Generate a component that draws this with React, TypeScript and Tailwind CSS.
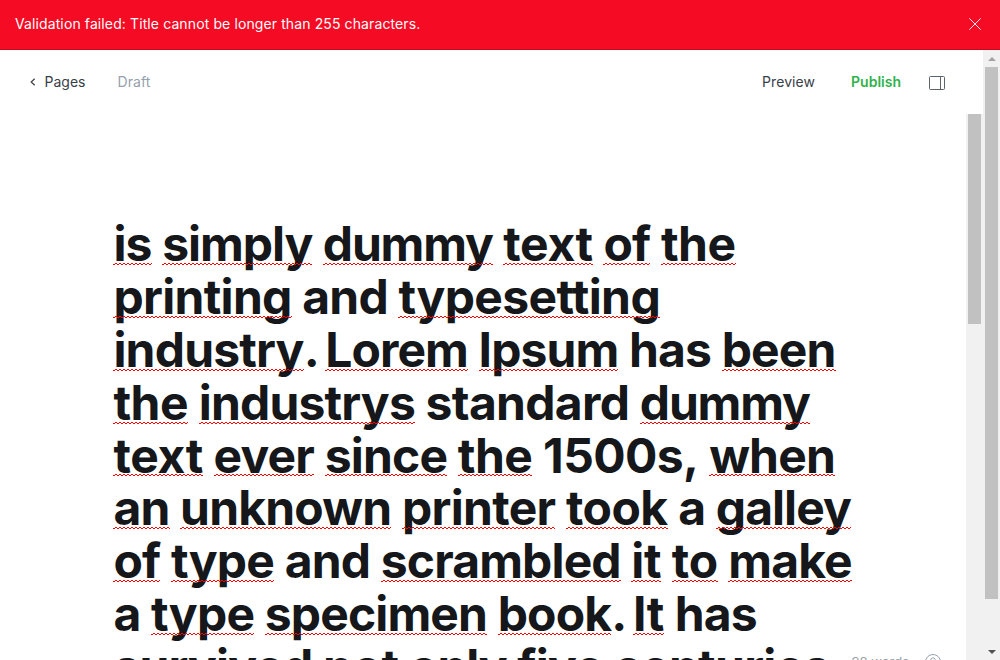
import React from "react";

const lines: string[] = [
  "_is _simply _dummy _text _of _the",
  "_printing and _typesetting",
  "_industry. _Lorem _Ipsum has _been",
  "_the _industrys standard _dummy",
  "_text _ever _since _the 1500s, _when",
  "_an _unknown _printer _took a _galley",
  "_of _type and _scrambled _it _to _make",
  "a _type _specimen _book. _It has",
  "_survived not _only _five _centuries,",
];

// Optical width adjustments, in pixels, spread over the letters of a word.
const adjustments: Record<string, number> = { t: 1, m: -0.5, y: -0.9, "0": 0.7, ".": -4.2 };

function tracking(text: string) {
  const extra = [...text].reduce((sum, c) => sum + (adjustments[c] ?? 0), 0);
  return { letterSpacing: `${(-0.816 + extra / text.length).toFixed(3)}px` };
}

function Squiggle() {
  return (
    <span
      aria-hidden="true"
      className="absolute bottom-[5px] left-0 h-[3px] w-full bg-[conic-gradient(from_0deg_at_50%_50%,#f00_0_25%,transparent_0_50%,#f00_0_75%,transparent_0)] bg-[length:4px_2px] bg-repeat-x"
    />
  );
}

function Word({ value }: { value: string }) {
  if (!value.startsWith("_")) return <span style={tracking(value)}>{value}</span>;
  const match = value.slice(1).match(/^([A-Za-z]+)(.*)$/);
  if (!match) return null;
  return (
    <>
      <span className="relative inline-block" style={tracking(match[1])}>
        {match[1]}
        <Squiggle />
      </span>
      {match[2] && <span style={tracking(match[2])}>{match[2]}</span>}
    </>
  );
}

export default function App() {
  return (
    <div className="flex h-[660px] w-[1000px] flex-col overflow-hidden bg-white font-['Inter',sans-serif] text-sm text-[#394047]">
      <div className="flex h-[50px] shrink-0 items-center justify-between border-b border-[#c9081e] bg-[#f50b23] pr-[19px] pb-px pl-[15px] text-white">
        <span className="tracking-[0.11px]">Validation failed: Title cannot be longer than 255 characters.</span>
        <svg width="12" height="12" viewBox="0 0 12 12" fill="none" stroke="#fff" strokeOpacity=".9">
          <path d="M.3.3l11.4 11.4M11.7.3L.3 11.7" />
        </svg>
      </div>
      <div className="flex min-h-0 flex-1">
        <div className="flex min-w-0 flex-1 flex-col">
          <header className="flex h-16 shrink-0 items-center justify-between pr-[38px] pl-[30px]">
            <div className="flex items-center">
              <svg width="6" height="8" viewBox="0 0 6 8" fill="none" stroke="#394047" strokeWidth="1.2">
                <path d="M4.7.8L1.2 4l3.5 3.2" />
              </svg>
              <span className="ml-[8.5px]">Pages</span>
              <span className="ml-8 tracking-[0.1px] text-[#95a1ad]">Draft</span>
            </div>
            <div className="flex items-center">
              <span className="tracking-[0.07px]">Preview</span>
              <span className="ml-9 font-semibold text-[#30b24a]">Publish</span>
              <svg className="mt-px ml-7" width="16" height="14" viewBox="0 0 16 14" fill="none" stroke="#5b636b">
                <rect x=".5" y=".5" width="15" height="13" rx="1" />
                <path d="M11.5.5v13" />
              </svg>
            </div>
          </header>
          <div className="flex min-h-0 flex-1">
            <main className="relative min-w-0 flex-1 overflow-hidden pt-[104.4px] pl-[113.4px]">
              <h1 className="text-[48px] leading-[52.8px] font-bold tracking-[-0.017em] whitespace-nowrap text-[#15171a]">
                {lines.map((line) => (
                  <div key={line} className="h-[52.8px]">
                    {line.split(" ").map((word, i) => (
                      <React.Fragment key={i}>
                        {i > 0 && " "}
                        <Word value={word} />
                      </React.Fragment>
                    ))}
                  </div>
                ))}
              </h1>
              <div className="absolute top-[540px] right-[25px] flex h-4 items-start bg-white pl-6 text-[13px] leading-4 text-[#95a1ad]">
                <span>98 words</span>
                <svg className="ml-4" width="16" height="16" viewBox="0 0 16 16" fill="none" stroke="#95a1ad">
                  <circle cx="8" cy="8" r="7.5" />
                  <path d="M5.7 6.2a2.3 2.3 0 1 1 3.3 2c-.7.3-1 .7-1 1.5M8 11.5v1" />
                </svg>
              </div>
            </main>
            <div className="w-[17px] shrink-0 bg-[#f1f1f1] pl-[2px]">
              <div className="h-[210px] w-[13px] bg-[#c1c1c1]" />
            </div>
          </div>
        </div>
        <div className="flex w-[17px] shrink-0 flex-col items-center bg-[#f1f1f1]">
          <div className="flex h-[17px] items-center">
            <svg width="8" height="4" viewBox="0 0 8 4"><path d="M0 4L4 0l4 4z" fill="#a3a3a3" /></svg>
          </div>
          <div className="h-[532px] w-[13px] bg-[#c1c1c1]" />
          <div className="mt-auto flex h-[17px] items-center">
            <svg width="8" height="4" viewBox="0 0 8 4"><path d="M0 0l4 4 4-4z" fill="#505050" /></svg>
          </div>
        </div>
      </div>
    </div>
  );
}
